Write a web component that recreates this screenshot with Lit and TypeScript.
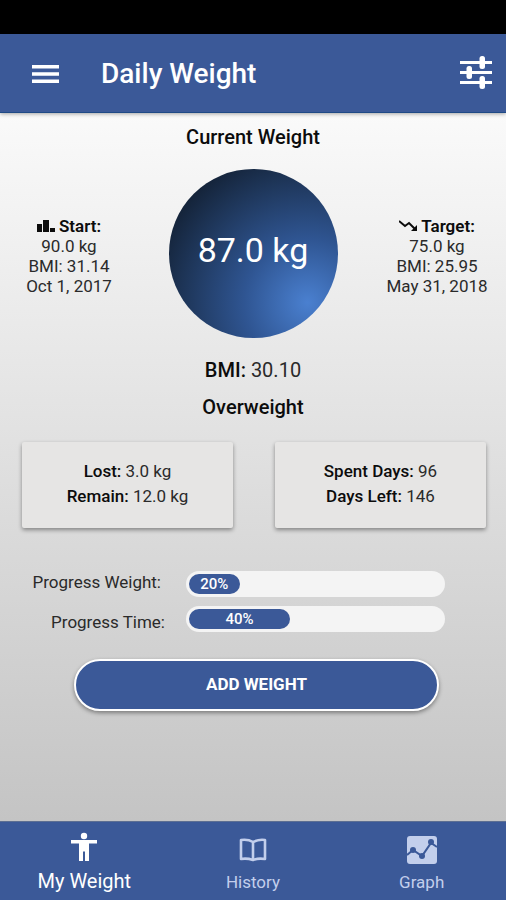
import { LitElement, html, css } from "lit";
import { customElement, property } from "lit/decorators.js";

@customElement("progress-bar")
class ProgressBar extends LitElement {
  @property({ type: Number }) value = 0;

  static styles = css`
    :host {
      display: block;
      box-sizing: border-box;
      height: 26px;
      padding: 3px;
      border-radius: 13px;
      background: #f4f4f4;
    }
    .fill {
      height: 20px;
      border-radius: 10px;
      background: #3b5998;
      color: #fff;
      font-size: 15px;
      font-weight: 500;
      line-height: 20px;
      text-align: center;
    }
  `;

  render() {
    return html`<div class="fill" style="width: ${this.value}%">${this.value}%</div>`;
  }
}

@customElement("app-root")
class AppRoot extends LitElement {
  static styles = css`
    :host {
      display: flex;
      flex-direction: column;
      min-height: 100vh;
      font-family: Roboto, "Liberation Sans", sans-serif;
      font-size: 17px;
      line-height: 20px;
      color: #2a2a2a;
    }
    button {
      font: inherit;
      color: inherit;
      border: 0;
      background: none;
      padding: 0;
      cursor: pointer;
    }
    b, h1, h2 {
      font-weight: 500;
      margin: 0;
      color: #0c0c0c;
    }
    svg {
      display: block;
      fill: currentColor;
    }
    .status {
      height: 34px;
      background: #000;
    }
    header {
      display: flex;
      align-items: center;
      box-sizing: border-box;
      height: 79px;
      padding: 2px 13px 0 32px;
      background: #3b5998;
      color: #fff;
      border-bottom: 1px solid #1f4a86;
      box-shadow: 0 1px 4px rgba(0, 0, 0, 0.35);
      z-index: 1;
    }
    header h1 {
      flex: 1;
      margin-left: 42px;
      font-size: 28px;
      line-height: 36px;
      color: #fff;
    }
    .tune {
      margin-bottom: 4px;
    }
    main {
      flex: 1;
      display: flex;
      flex-direction: column;
      background: linear-gradient(#fafafa, #c4c4c4);
      text-align: center;
    }
    h2 {
      font-size: 20px;
      line-height: 24px;
    }
    .title {
      margin-top: 12px;
    }
    .overview {
      display: flex;
      justify-content: space-between;
      align-items: center;
      margin-top: 20px;
    }
    .side {
      width: 138px;
      padding-top: 5px;
    }
    .side .head {
      display: flex;
      justify-content: center;
      align-items: center;
      gap: 4px;
      color: #0c0c0c;
    }
    .side b {
      font-weight: 600;
    }
    .circle {
      display: flex;
      align-items: center;
      justify-content: center;
      box-sizing: border-box;
      width: 169px;
      height: 169px;
      padding-bottom: 8px;
      border-radius: 50%;
      background: radial-gradient(circle at 82% 79%, #4a80d0 0, #2f5592 33%, #1d3456 66%, #0a1018 100%);
      color: #fff;
      font-size: 34px;
      line-height: 44px;
    }
    .bmi {
      margin-top: 20px;
      font-size: 20px;
      line-height: 24px;
    }
    .verdict {
      margin-top: 13px;
    }
    .cards {
      display: grid;
      grid-template-columns: 1fr 1fr;
      gap: 42px;
      margin: 23px 20px 0 22px;
    }
    .card {
      padding: 17px 0 19px;
      border-radius: 2px;
      background: #e6e5e4;
      box-shadow: 0 2px 4px rgba(0, 0, 0, 0.4);
      line-height: 25px;
    }
    .progress {
      display: grid;
      grid-template-columns: 165px 1fr;
      column-gap: 21px;
      margin: 43px 61px 0 0;
    }
    .labels {
      line-height: 40px;
      margin-top: -9px;
      text-align: right;
    }
    .labels .first {
      padding-right: 4px;
    }
    .bars {
      display: grid;
      gap: 9px;
      align-content: start;
    }
    .add {
      margin: 17px 67px 0 74px;
      height: 52px;
      border: 2px solid #fff;
      border-radius: 26px;
      background: #3b5998;
      color: #fff;
      font-weight: 700;
      padding-bottom: 3px;
      box-shadow: 0 2px 4px rgba(0, 0, 0, 0.4);
    }
    nav {
      display: grid;
      grid-template-columns: repeat(3, 1fr);
      height: 79px;
      box-sizing: border-box;
      background: #3b5998;
      border-top: 1px solid #5d6f92;
    }
    nav button {
      display: flex;
      flex-direction: column;
      align-items: center;
      justify-content: flex-end;
      gap: 6px;
      padding-bottom: 7px;
      color: #c3cfec;
      line-height: 22px;
    }
    nav .active {
      gap: 8px;
      padding-bottom: 8px;
      color: #fff;
      font-size: 20px;
    }
  `;

  render() {
    return html`
      <div class="status"></div>
      <header>
        <button aria-label="Menu">
          <svg width="27" height="20" viewBox="0 0 27 20">
            <path d="M0 1h27v3.5H0zM0 8.3h27v3.5H0zM0 15.6h27v3.5H0z" />
          </svg>
        </button>
        <h1>Daily Weight</h1>
        <button class="tune" aria-label="Settings">
          <svg width="34" height="34" viewBox="0 0 34 34">
            <path d="M1 6h32v3H1zM1 16h32v3H1zM1 26h32v3H1z" />
            <rect x="20.5" y="1" width="5.5" height="13" rx="2.5" />
            <rect x="7.5" y="11" width="5.5" height="13" rx="2.5" />
            <rect x="20.5" y="21" width="5.5" height="13" rx="2.5" />
          </svg>
        </button>
      </header>
      <main>
        <h2 class="title">Current Weight</h2>
        <div class="overview">
          <div class="side">
            <div class="head">
              <svg width="18" height="12" viewBox="0 0 18 12">
                <path d="M0 4h5v8H0zM6 0h6v12H6zM13 8h5v4h-5z" />
              </svg>
              <b>Start:</b>
            </div>
            <div>90.0 kg</div>
            <div>BMI: 31.14</div>
            <div>Oct 1, 2017</div>
          </div>
          <div class="circle">87.0 kg</div>
          <div class="side">
            <div class="head">
              <svg width="18" height="12" viewBox="0 0 18 12">
                <path d="M0 1l6 5 4-3 6 6" fill="none" stroke="currentColor" stroke-width="2" />
                <path d="M18 5v6h-6z" />
              </svg>
              <b>Target:</b>
            </div>
            <div>75.0 kg</div>
            <div>BMI: 25.95</div>
            <div>May 31, 2018</div>
          </div>
        </div>
        <div class="bmi"><b>BMI:</b> 30.10</div>
        <h2 class="verdict">Overweight</h2>
        <div class="cards">
          <div class="card">
            <div><b>Lost:</b> 3.0 kg</div>
            <div><b>Remain:</b> 12.0 kg</div>
          </div>
          <div class="card">
            <div><b>Spent Days:</b> 96</div>
            <div><b>Days Left:</b> 146</div>
          </div>
        </div>
        <div class="progress">
          <div class="labels">
            <div class="first" id="weight">Progress Weight:</div>
            <div id="time">Progress Time:</div>
          </div>
          <div class="bars">
            <progress-bar role="progressbar" aria-labelledby="weight" aria-valuenow="20" value="20"></progress-bar>
            <progress-bar role="progressbar" aria-labelledby="time" aria-valuenow="40" value="40"></progress-bar>
          </div>
        </div>
        <button class="add">ADD WEIGHT</button>
      </main>
      <nav>
        <button class="active">
          <svg width="28" height="30" viewBox="0 0 28 30">
            <circle cx="14" cy="4" r="3.2" />
            <path d="M1 8h26v3.5h-8V29h-4V19.500h-2V29H9V11.500H1z" />
          </svg>
          My Weight
        </button>
        <button>
          <svg width="30" height="30" viewBox="0 0 30 30">
            <path
              d="M3 5q7-1 12 2 6-3 12-2v19q-7-1-12 1-6-2-12-1zM15 7v18"
              fill="none"
              stroke="currentColor"
              stroke-width="2.600"
              stroke-linejoin="round"
            />
          </svg>
          History
        </button>
        <button>
          <svg width="32" height="30" viewBox="0 0 32 30">
            <rect x="1" y="1" width="30" height="28" rx="3" />
            <path d="M1 20l6-5 9 6 9-13 6 4" fill="none" stroke="#3b5998" stroke-width="2" />
            <g fill="#3b5998">
              <circle cx="7" cy="15" r="3" />
              <circle cx="16" cy="21" r="3" />
              <circle cx="25" cy="7" r="3" />
            </g>
          </svg>
          Graph
        </button>
      </nav>
    `;
  }
}
